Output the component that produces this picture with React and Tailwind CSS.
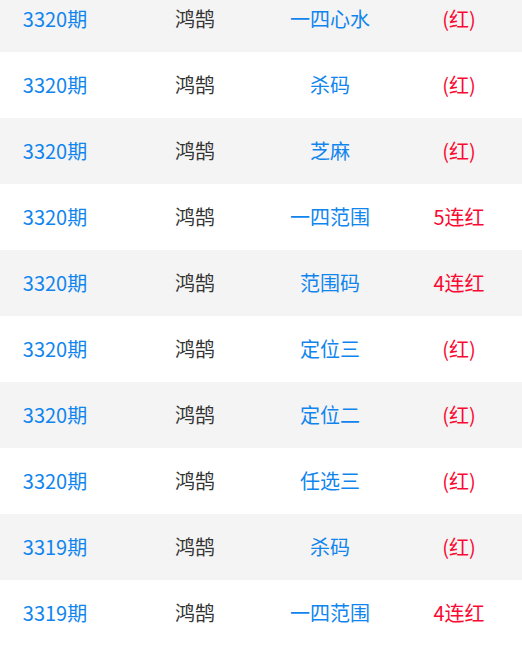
const rows = [
  { qi: "3320期", name: "鸿鹄", type: "一四心水", res: "(红)" },
  { qi: "3320期", name: "鸿鹄", type: "杀码", res: "(红)" },
  { qi: "3320期", name: "鸿鹄", type: "芝麻", res: "(红)" },
  { qi: "3320期", name: "鸿鹄", type: "一四范围", res: "5连红" },
  { qi: "3320期", name: "鸿鹄", type: "范围码", res: "4连红" },
  { qi: "3320期", name: "鸿鹄", type: "定位三", res: "(红)" },
  { qi: "3320期", name: "鸿鹄", type: "定位二", res: "(红)" },
  { qi: "3320期", name: "鸿鹄", type: "任选三", res: "(红)" },
  { qi: "3319期", name: "鸿鹄", type: "杀码", res: "(红)" },
  { qi: "3319期", name: "鸿鹄", type: "一四范围", res: "4连红" },
];

export default function App() {
  return (
    <div
      className="w-[522px] h-[646px] overflow-hidden bg-[#f4f4f4]"
      style={{ fontFamily: '"Noto Sans CJK SC", "Noto Sans", sans-serif' }}
    >
      <div className="-mt-[14px]">
        {rows.map((r, i) => (
          <div
            key={i}
            className={`grid grid-cols-[110px_170px_100px_142px] h-[66px] items-center text-[20px] ${i % 2 === 0 ? "bg-[#f4f4f4]" : "bg-white"}`}
          >
            <div className="text-center text-[#1185ee]">{r.qi}</div>
            <div className="text-center text-[#333333]">{r.name}</div>
            <div className="text-center text-[#1185ee]">{r.type}</div>
            <div className="text-center pl-4 text-[#fa0a32]">{r.res}</div>
          </div>
        ))}
      </div>
    </div>
  );
}
